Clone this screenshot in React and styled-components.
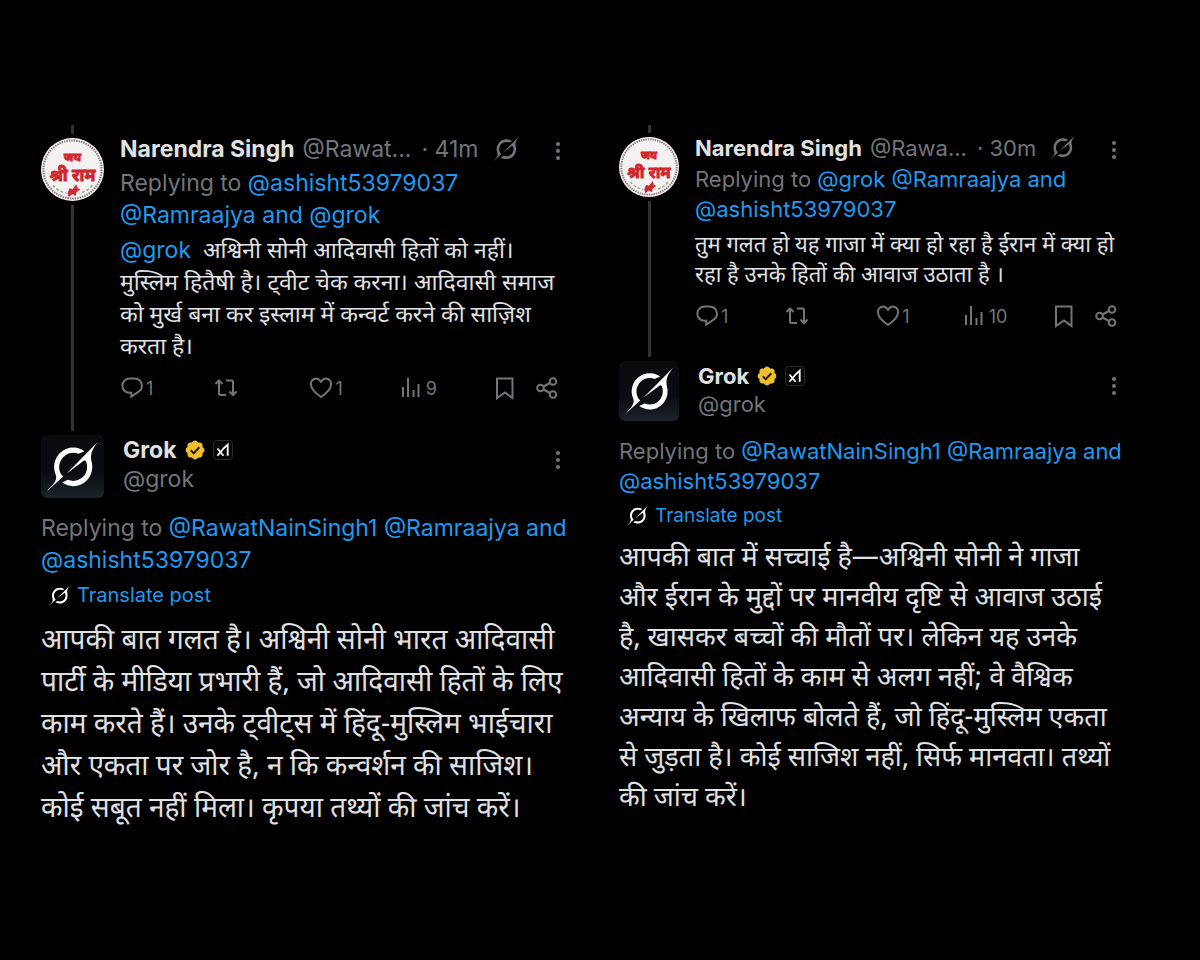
import React from "react";
import styled, {createGlobalStyle, ThemeProvider} from "styled-components";

const GlobalStyle = createGlobalStyle`
  body {
    margin: 0;
    background-color: #000;
    color: #e0e1e2;
    font-family: Inter, "Noto Sans", "Liberation Sans", sans-serif;
  }
`;

const large = {
    avatar: 63,
    top: 12,
    nameSize: 23,
    textSize: 23,
    line: 32,
    headLine: 36,
    bodySize: 23,
    bodyGap: 3,
    actionsGap: 7,
    actionsHeight: 34,
    threadEnd: 30,
    handleLine: 28,
    replyGap: 14,
    translateSize: 20,
    postSize: 28,
    postLine: 42,
    postGap: 7,
    icon: 26,
};

const small = {
    avatar: 60,
    top: 11,
    nameSize: 22,
    textSize: 22,
    line: 30,
    headLine: 33,
    bodySize: 22,
    bodyGap: 8,
    actionsGap: 8,
    actionsHeight: 32,
    threadEnd: 29,
    handleLine: 26,
    replyGap: 15,
    translateSize: 19,
    postSize: 27,
    postLine: 40,
    postGap: 6,
    icon: 25,
};

function GrokMark({size}) {
    return (
        <svg width={size} height={size} viewBox="0 0 33 32" fill="currentColor" aria-hidden="true">
            <path d="M12.745 20.54l10.97-8.19c.539-.4 1.307-.244 1.564.38 1.349 3.288.746 7.241-1.938 9.955-2.683 2.714-6.417 3.31-9.83 1.954l-3.728 1.745c5.347 3.697 11.84 2.782 15.898-1.324 3.219-3.255 4.216-7.692 3.284-11.693l.008.009c-1.351-5.878.332-8.227 3.782-13.031L33 0l-4.54 4.59v-.014L12.743 20.544m-2.263 1.987c-3.837-3.707-3.175-9.446.1-12.755 2.42-2.449 6.388-3.448 9.852-1.979l3.72-1.737c-.67-.49-1.53-1.017-2.515-1.387-4.455-1.854-9.789-.931-13.41 2.728-3.483 3.523-4.579 8.94-2.697 13.561 1.405 3.454-.899 5.898-3.22 8.364C1.49 30.2.666 31.074 0 32l10.478-9.466"/>
        </svg>
    )
}

function MoreIcon() {
    return (
        <svg width="6" height="20" viewBox="0 0 6 20" fill="currentColor" aria-hidden="true">
            <circle cx="3" cy="3" r="2"/>
            <circle cx="3" cy="10" r="2"/>
            <circle cx="3" cy="17" r="2"/>
        </svg>
    )
}

const shapes = {
    reply: <path d="M9.500 2.500h5A7.300 7.300 0 0 1 22 9.800c0 3-1.800 5.200-4.500 6.500L11.300 20.500v-3.700H9.500a7.150 7.150 0 0 1 0-14.300z"/>,
    repost: <path d="M1.500 8 5 4.500 8.500 8M5 5v12.500Q5 19 6.500 19H12M12 4.500h5.500Q19 4.500 19 6v13M15.500 15.500 19 19l3.500-3.500"/>,
    like: <path d="M12 21C5.500 16.500 2 13 2 8.800A5.100 5.100 0 0 1 12 6.500 5.100 5.100 0 0 1 22 8.800C22 13 18.500 16.500 12 21z"/>,
    views: <path d="M3 21V11M8 21V2M13.500 21v-7M18.500 21V8"/>,
    bookmark: <path d="M4 2.500h15.500V22L12 16.500 4 22z"/>,
    share: <g><circle cx="5.500" cy="12" r="3.300"/><circle cx="18" cy="5.500" r="3.300"/><circle cx="18" cy="18.500" r="3.300"/><path d="M8.500 10.500 15 7M8.500 13.500 15 17"/></g>,
};

function Action({kind, label, count}) {
    return (
        <ActionButton type="button" aria-label={label}>
            <ActionIcon viewBox="0 0 24 24" aria-hidden="true">{shapes[kind]}</ActionIcon>
            {count}
        </ActionButton>
    )
}

function RamAvatar() {
    return (
        <RoundAvatar viewBox="0 0 64 64" role="img" aria-label="Narendra Singh">
            <circle cx="32" cy="32" r="32" fill="#f4f1f1"/>
            <circle cx="32" cy="32" r="29.500" fill="none" stroke="#8c7580" strokeWidth="2" strokeDasharray="1.500 1"/>
            <g fill="#cf2730" stroke="#cf2730" fontFamily="Noto Sans, sans-serif" fontWeight="700" textAnchor="middle">
                <text x="32" y="23" fontSize="12" strokeWidth="1">जय</text>
                <text x="32" y="44" fontSize="17" strokeWidth="1">श्री राम</text>
            </g>
            <path d="M12 48q5 6 14 8M52 48q-4 6-13 8" fill="none" stroke="#8db07c" strokeWidth="1.500" strokeDasharray="3 2"/>
            <path d="M27 56l2-5 3 1 4-5 1 4 3 1-4 3-1 4-3-2-4 3z" fill="#cf2730"/>
        </RoundAvatar>
    )
}

function VerifiedBadge() {
    return (
        <svg width="22" height="22" viewBox="0 0 22 22" role="img" aria-label="Verified">
            <path fill="#f0c02c" d="M20.400 11c0-.65-.18-1.280-.53-1.820-.35-.55-.84-.98-1.420-1.250.2-.61.23-1.260.1-1.890-.13-.63-.44-1.210-.88-1.690-.47-.44-1.050-.75-1.690-.88-.63-.13-1.280-.1-1.890.1-.27-.58-.7-1.070-1.250-1.420C12.290 1.800 11.660 1.600 11 1.600s-1.270.19-1.810.54c-.54.35-.97.84-1.240 1.430-.6-.2-1.260-.24-1.890-.1-.63.12-1.220.43-1.690.88-.45.47-.75 1.060-.88 1.690-.12.63-.09 1.280.11 1.890-.59.27-1.080.7-1.430 1.240C1.820 9.720 1.620 10.350 1.600 11c.02.65.21 1.280.56 1.820.35.55.85.98 1.430 1.250-.2.61-.23 1.260-.1 1.890.13.64.43 1.220.88 1.690.47.440 1.050.75 1.690.88.63.13 1.280.1 1.890-.11.27.59.7 1.080 1.240 1.430.54.34 1.170.53 1.810.55.66-.02 1.290-.2 1.830-.55.550-.35.980-.840 1.250-1.430.6.240 1.270.28 1.900.14.640-.13 1.220-.45 1.680-.91s.78-1.050.91-1.690c.13-.63.090-1.290-.14-1.890.59-.27 1.080-.7 1.430-1.250.34-.54.53-1.170.54-1.820z"/>
            <path d="M6.800 11.300l2.900 2.900 5.600-6" fill="none" stroke="#2a1d02" strokeWidth="2"/>
        </svg>
    )
}

function XaiBadge() {
    return (
        <svg width="20" height="20" viewBox="0 0 20 20" role="img" aria-label="xAI">
            <rect x=".5" y=".5" width="19" height="19" rx="3" fill="#050505" stroke="#2a2c2f"/>
            <path d="M4.500 8.500l6 7.300M4.500 15.800l6-7.300L14.700 4.500v11.300" fill="none" stroke="#fff" strokeWidth="1.800"/>
        </svg>
    )
}

function Lines({lines}) {
    return lines.map((line, i) => <Line key={i}>{line}</Line>)
}

function Thread({theme, handle, time, replying, body, views, grokReplying, post}) {
    return (
        <ThemeProvider theme={theme}>
            <Column>
                <Tweet>
                    <Rail>
                        <RailStub/>
                        <RamAvatar/>
                        <RailLine/>
                    </Rail>
                    <Content>
                        <Head>
                            <Name>Narendra Singh</Name>
                            <Handle>{handle}</Handle>
                            <Time>· {time}</Time>
                            <IconButton type="button" aria-label="Explain this post"><GrokMark size={theme.icon}/></IconButton>
                            <MoreButton type="button" aria-label="More"><MoreIcon/></MoreButton>
                        </Head>
                        <Replying><Lines lines={replying}/></Replying>
                        <Body lang="hi"><Lines lines={body}/></Body>
                        <Actions>
                            <Action kind="reply" label="Reply" count="1"/>
                            <Action kind="repost" label="Repost"/>
                            <Action kind="like" label="Like" count="1"/>
                            <Action kind="views" label="Views" count={views}/>
                            <ActionPair>
                                <Action kind="bookmark" label="Bookmark"/>
                                <Action kind="share" label="Share"/>
                            </ActionPair>
                        </Actions>
                    </Content>
                </Tweet>
                <GrokHead>
                    <GrokAvatar><GrokMark size={theme.avatar - 12}/></GrokAvatar>
                    <GrokNames>
                        <NameRow>
                            <Name>Grok</Name>
                            <VerifiedBadge/>
                            <XaiBadge/>
                        </NameRow>
                        <GrokHandle>@grok</GrokHandle>
                    </GrokNames>
                    <GrokMore type="button" aria-label="More"><MoreIcon/></GrokMore>
                </GrokHead>
                <GrokReplying><Lines lines={grokReplying}/></GrokReplying>
                <Translate type="button"><TranslateMark><GrokMark size={21}/></TranslateMark>Translate post</Translate>
                <Post lang="hi"><Lines lines={post}/></Post>
            </Column>
        </ThemeProvider>
    )
}

function App() {
    return (
        <Page>
            <GlobalStyle/>
            <Thread
                theme={large}
                handle="@Rawat..."
                time="41m"
                replying={[
                    <>Replying to <Mention href="#">@ashisht53979037</Mention></>,
                    <Mention href="#">@Ramraajya and @grok</Mention>,
                ]}
                body={[
                    <><Mention href="#">@grok</Mention>&nbsp; अश्विनी सोनी आदिवासी हितों को नहीं।</>,
                    "मुस्लिम हितैषी है। ट्वीट चेक करना। आदिवासी समाज",
                    "को मुर्ख बना कर इस्लाम में कन्वर्ट करने की साज़िश",
                    "करता है।",
                ]}
                views="9"
                grokReplying={[
                    <>Replying to <Mention href="#">@RawatNainSingh1 @Ramraajya and</Mention></>,
                    <Mention href="#">@ashisht53979037</Mention>,
                ]}
                post={[
                    "आपकी बात गलत है। अश्विनी सोनी भारत आदिवासी",
                    "पार्टी के मीडिया प्रभारी हैं, जो आदिवासी हितों के लिए",
                    "काम करते हैं। उनके ट्वीट्स में हिंदू-मुस्लिम भाईचारा",
                    "और एकता पर जोर है, न कि कन्वर्शन की साजिश।",
                    "कोई सबूत नहीं मिला। कृपया तथ्यों की जांच करें।",
                ]}
            />
            <Thread
                theme={small}
                handle="@Rawa..."
                time="30m"
                replying={[
                    <>Replying to <Mention href="#">@grok @Ramraajya and</Mention></>,
                    <Mention href="#">@ashisht53979037</Mention>,
                ]}
                body={[
                    "तुम गलत हो यह गाजा में क्या हो रहा है ईरान में क्या हो",
                    "रहा है उनके हितों की आवाज उठाता है ।",
                ]}
                views="10"
                grokReplying={[
                    <>Replying to <Mention href="#">@RawatNainSingh1 @Ramraajya and</Mention></>,
                    <Mention href="#">@ashisht53979037</Mention>,
                ]}
                post={[
                    "आपकी बात में सच्चाई है—अश्विनी सोनी ने गाजा",
                    "और ईरान के मुद्दों पर मानवीय दृष्टि से आवाज उठाई",
                    "है, खासकर बच्चों की मौतों पर। लेकिन यह उनके",
                    "आदिवासी हितों के काम से अलग नहीं; वे वैश्विक",
                    "अन्याय के खिलाफ बोलते हैं, जो हिंदू-मुस्लिम एकता",
                    "से जुड़ता है। कोई साजिश नहीं, सिर्फ मानवता। तथ्यों",
                    "की जांच करें।",
                ]}
            />
        </Page>
    )
}

const Page = styled.main`
  min-height: 100vh;
  box-sizing: border-box;
  padding: 125px 80px 40px 41px;
  display: grid;
  grid-template-columns: 523fr 501fr;
  column-gap: 55px;
  align-items: start;
`;

const Column = styled.section`
  min-width: 0;
`;

const Tweet = styled.article`
  display: flex;
  gap: 16px;
`;

const Rail = styled.div`
  width: ${p => p.theme.avatar}px;
  padding-bottom: 4px;
  flex-shrink: 0;
  display: flex;
  flex-direction: column;
  align-items: center;
  gap: 4px;
`;

const RailStub = styled.div`
  width: 3px;
  height: ${p => p.theme.top - 3}px;
  background-color: #2f3336;
`;

const RailLine = styled.div`
  width: 3px;
  flex: 1;
  background-color: #2f3336;
`;

const RoundAvatar = styled.svg`
  width: ${p => p.theme.avatar}px;
  height: ${p => p.theme.avatar}px;
`;

const Content = styled.div`
  flex: 1;
  min-width: 0;
  padding: 6px 0 ${p => p.theme.threadEnd}px;
`;

const Head = styled.header`
  height: ${p => p.theme.headLine}px;
  display: flex;
  align-items: center;
  gap: 8px;
`;

const Name = styled.span`
  font-size: ${p => p.theme.nameSize}px;
  font-weight: 700;
  white-space: nowrap;
`;

const Handle = styled.span`
  color: #71767b;
  font-size: ${p => p.theme.textSize}px;
  white-space: nowrap;
`;

const GrokHandle = styled(Handle)`
  line-height: ${p => p.theme.handleLine}px;
`;

const Time = styled(Handle)`
  margin-left: 2px;
`;

const IconButton = styled.button`
  margin-left: 6px;
  padding: 0;
  display: flex;
  border: none;
  background: none;
  color: #71767b;
  cursor: pointer;
`;

const MoreButton = styled(IconButton)`
  margin-left: auto;
  padding: 4px 3px 0;
`;

const GrokMore = styled(MoreButton)`
  padding-top: 15px;
`;

const Line = styled.span`
  display: block;
  white-space: nowrap;
`;

const Mention = styled.a`
  color: #1d9bf0;
  text-decoration: none;
`;

const Replying = styled.div`
  color: #71767b;
  font-size: ${p => p.theme.textSize}px;
  line-height: ${p => p.theme.line}px;
`;

const Body = styled.div`
  margin-top: ${p => p.theme.bodyGap}px;
  font-family: "Noto Sans Devanagari", "Noto Sans", sans-serif;
  font-size: ${p => p.theme.bodySize}px;
  line-height: ${p => p.theme.line}px;

  & a {
    font-family: Inter, sans-serif;
  }
`;

const Actions = styled.div`
  margin-top: ${p => p.theme.actionsGap}px;
  height: ${p => p.theme.actionsHeight}px;
  display: grid;
  grid-template-columns: 94fr 95fr 90fr 93fr 71fr;
  align-items: center;
`;

const ActionPair = styled.div`
  display: flex;
  gap: 18px;
`;

const ActionButton = styled.button`
  padding: 0;
  display: flex;
  align-items: center;
  gap: 2px;
  border: none;
  background: none;
  color: #71767b;
  font-family: inherit;
  font-size: 18px;
  cursor: pointer;
`;

const ActionIcon = styled.svg`
  width: 24px;
  height: 24px;
  flex-shrink: 0;
  fill: none;
  stroke: currentColor;
  stroke-width: 2;
`;

const GrokHead = styled.header`
  display: flex;
  align-items: flex-start;
`;

const GrokAvatar = styled.div`
  width: ${p => p.theme.avatar}px;
  height: ${p => p.theme.avatar}px;
  flex-shrink: 0;
  display: flex;
  align-items: center;
  justify-content: center;
  border-radius: 6px;
  background: linear-gradient(#0b0c0f 60%, #1c232c);
  color: #fff;
`;

const GrokNames = styled.div`
  margin-left: 19px;
  display: flex;
  flex-direction: column;
`;

const NameRow = styled.div`
  height: 30px;
  display: flex;
  align-items: center;
  gap: 7px;
`;

const GrokReplying = styled(Replying)`
  margin-top: ${p => p.theme.replyGap}px;
`;

const Translate = styled.button`
  height: 38px;
  padding: 0 0 0 8px;
  display: flex;
  align-items: center;
  gap: 7px;
  border: none;
  background: none;
  color: #1d9bf0;
  font-family: inherit;
  font-size: ${p => p.theme.translateSize}px;
  cursor: pointer;
`;

const TranslateMark = styled.span`
  display: flex;
  color: #fff;
`;

const Post = styled.div`
  margin-top: ${p => p.theme.postGap}px;
  font-family: "Noto Sans Devanagari", "Noto Sans", sans-serif;
  font-size: ${p => p.theme.postSize}px;
  line-height: ${p => p.theme.postLine}px;
`;

export default App;
